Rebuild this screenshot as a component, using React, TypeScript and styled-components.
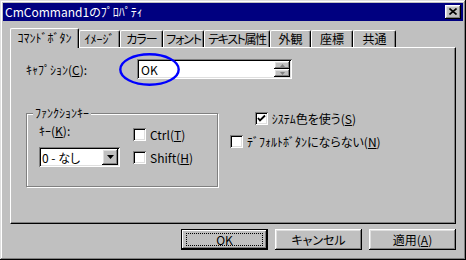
import React from "react";
import styled, { createGlobalStyle } from "styled-components";

const GlobalStyle = createGlobalStyle`
  html, body {
    margin: 0;
    padding: 0;
    background: #c0c0c0;
  }
  body {
    font-family: "Noto Sans CJK JP", "Noto Sans", sans-serif;
    font-size: 12px;
    font-feature-settings: "palt";
    text-autospace: no-autospace;
    text-spacing-trim: space-all;
    color: #000;
  }
  * {
    box-sizing: border-box;
  }
`;

const raised = `
  box-shadow: inset -1px -1px #000, inset 1px 1px #fff, inset -2px -2px #808080,
    inset 2px 2px #dfdfdf;
`;

const sunken = `
  box-shadow: inset 1px 1px #808080, inset -1px -1px #fff, inset 2px 2px #000,
    inset -2px -2px #dfdfdf;
`;

const Window = styled.div`
  width: 466px;
  height: 260px;
  padding: 3px;
  background: #c0c0c0;
  display: flex;
  flex-direction: column;
  box-shadow: inset -1px -1px #000, inset 1px 1px #dfdfdf, inset -2px -2px #808080,
    inset 2px 2px #fff;
`;

const TitleBar = styled.div`
  height: 18px;
  flex: none;
  background: #000080;
  display: flex;
  align-items: center;
  justify-content: space-between;
  padding: 0 2px;
`;

const TitleText = styled.span`
  color: #fff;
  font-size: 12px;
  line-height: 14px;
  white-space: nowrap;
`;

const CloseButton = styled.div`
  width: 16px;
  height: 14px;
  background: #c0c0c0;
  display: flex;
  align-items: center;
  justify-content: center;
  padding-bottom: 1px;
  ${raised}
`;

const Body = styled.div`
  flex: 1;
  display: flex;
  flex-direction: column;
  padding: 7px 7px 0;
`;

const TabRow = styled.div`
  height: 19px;
  display: flex;
  align-items: flex-end;
  position: relative;
  z-index: 1;
`;

const Tab = styled.div<{ $w: number; $ls: number; $active?: boolean }>`
  width: ${(p) => p.$w}px;
  height: ${(p) => (p.$active ? 20 : 17)}px;
  margin-bottom: ${(p) => (p.$active ? -1 : 0)}px;
  padding-bottom: ${(p) => (p.$active ? 3 : 1)}px;
  flex: none;
  background: #c0c0c0;
  border-top: 1px solid #fff;
  border-left: 1px solid #fff;
  border-right: 1px solid #000;
  border-radius: 2px 2px 0 0;
  box-shadow: inset -1px 0 #808080;
  display: flex;
  align-items: center;
  justify-content: center;
  white-space: nowrap;
  line-height: 13px;
  letter-spacing: ${(p) => p.$ls}px;
`;

const Panel = styled.div`
  width: 446px;
  height: 177px;
  flex: none;
  border-top: 1px solid #fff;
  border-left: 1px solid #fff;
  border-right: 1px solid #000;
  border-bottom: 1px solid #000;
  box-shadow: inset -1px -1px #808080;
  padding: 11px 15px;
`;

const CaptionRow = styled.div`
  display: flex;
  align-items: center;
  height: 20px;
  position: relative;
`;

const CaptionLabel = styled.span`
  width: 111px;
  line-height: 13px;
  white-space: nowrap;
`;

const TextBox = styled.div`
  width: 155px;
  height: 20px;
  background: #fff;
  display: flex;
  align-items: center;
  padding: 2px 2px 2px 4px;
  ${sunken}
`;

const TextValue = styled.span`
  flex: 1;
  line-height: 13px;
`;

const SpinColumn = styled.div`
  width: 16px;
  height: 16px;
  display: flex;
  flex-direction: column;
`;

const SpinButton = styled.div`
  flex: 1;
  background: #c0c0c0;
  display: flex;
  align-items: center;
  justify-content: center;
  ${raised}
`;

const Marker = styled.svg`
  position: absolute;
  left: 93px;
  top: -6px;
  pointer-events: none;
`;

const LowerRow = styled.div`
  display: flex;
  align-items: flex-start;
  gap: 12px;
  margin-top: 28px;
`;

const GroupBox = styled.div`
  width: 192px;
  height: 74px;
  margin-top: 6px;
  position: relative;
  border: 1px solid #808080;
  box-shadow: inset 1px 1px #fff, 1px 1px #fff;
`;

const GroupLabel = styled.span`
  position: absolute;
  top: -8px;
  left: 6px;
  padding: 0 2px;
  background: #c0c0c0;
  line-height: 14px;
  white-space: nowrap;
`;

const GroupGrid = styled.div`
  display: grid;
  grid-template-columns: 94px auto;
  grid-template-rows: 20px 20px;
  row-gap: 3px;
  padding: 10px 0 0 12px;
`;

const KeyLabel = styled.span`
  align-self: start;
  line-height: 13px;
  white-space: nowrap;
`;

const Combo = styled.div`
  width: 81px;
  height: 20px;
  background: #fff;
  display: flex;
  align-items: center;
  padding: 2px 2px 2px 3px;
  ${sunken}
`;

const ComboValue = styled.span`
  flex: 1;
  line-height: 13px;
  white-space: nowrap;
`;

const DropButton = styled.div`
  width: 16px;
  height: 16px;
  background: #c0c0c0;
  display: flex;
  align-items: center;
  justify-content: center;
  ${raised}
`;

const RightColumn = styled.div`
  display: flex;
  flex-direction: column;
  gap: 10px;
  padding-top: 5px;
`;

const CheckRow = styled.label`
  display: flex;
  align-items: center;
  justify-self: start;
  align-self: center;
  gap: 4px;
  line-height: 13px;
  white-space: nowrap;
`;

const Box = styled.span`
  width: 13px;
  height: 13px;
  flex: none;
  background: #fff;
  display: flex;
  ${sunken}
`;

const Key = styled.span`
  text-decoration: underline;
  text-underline-offset: 1px;
`;

const ButtonRow = styled.div`
  display: flex;
  justify-content: flex-end;
  gap: 7px;
  margin-top: 5px;
`;

const Button = styled.div<{ $default?: boolean }>`
  width: 87px;
  height: 21px;
  background: #c0c0c0;
  display: flex;
  align-items: center;
  justify-content: center;
  position: relative;
  line-height: 13px;
  white-space: nowrap;
  ${(p) =>
    p.$default
      ? `
    border: 1px solid #000;
    box-shadow: inset -1px -1px #000, inset 1px 1px #fff, inset -2px -2px #808080;
    &::after {
      content: "";
      position: absolute;
      inset: 3px 4px;
      border: 1px dotted #000;
    }
  `
      : raised}
`;

const CheckBox = ({ checked }: { checked?: boolean }) => (
  <Box>
    {checked && (
      <svg width="13" height="13" viewBox="0 0 13 13">
        <polyline
          points="3,6 5,8.5 10,3.5"
          fill="none"
          stroke="#000"
          strokeWidth="1.8"
        />
      </svg>
    )}
  </Box>
);

const tabs = [
  { label: "ｺﾏﾝﾄﾞﾎﾞﾀﾝ", w: 69, ls: 0 },
  { label: "ｲﾒｰｼﾞ", w: 41, ls: 0 },
  { label: "カラー", w: 43, ls: -1 },
  { label: "フォント", w: 41, ls: -1.2 },
  { label: "テキスト属性", w: 66, ls: -1.4 },
  { label: "外観", w: 41, ls: 0 },
  { label: "座標", w: 42, ls: 0 },
  { label: "共通", w: 43, ls: 0 },
];

export default function App() {
  return (
    <>
      <GlobalStyle />
      <Window>
        <TitleBar>
          <TitleText>CmCommand1のﾌﾟﾛﾊﾟﾃｨ</TitleText>
          <CloseButton>
            <svg width="8" height="7" viewBox="0 0 8 7">
              <path d="M0.5 0.5L7.5 6.5M7.5 0.5L0.5 6.5" stroke="#000" strokeWidth="1.6" />
            </svg>
          </CloseButton>
        </TitleBar>
        <Body>
          <TabRow>
            {tabs.map((t, i) => (
              <Tab key={t.label} $w={t.w} $ls={t.ls} $active={i === 0}>
                {t.label}
              </Tab>
            ))}
          </TabRow>
          <Panel>
            <CaptionRow>
              <CaptionLabel>
                ｷｬﾌﾟｼｮﾝ(<Key>C</Key>):
              </CaptionLabel>
              <TextBox>
                <TextValue>OK</TextValue>
                <SpinColumn>
                  <SpinButton>
                    <svg width="5" height="3" viewBox="0 0 5 3">
                      <polygon points="2.5,0 5,3 0,3" fill="#808080" />
                    </svg>
                  </SpinButton>
                  <SpinButton>
                    <svg width="5" height="3" viewBox="0 0 5 3">
                      <polygon points="0,0 5,0 2.5,3" fill="#808080" />
                    </svg>
                  </SpinButton>
                </SpinColumn>
              </TextBox>
              <Marker width="61" height="33" viewBox="0 0 61 33">
                <ellipse
                  cx="30.5"
                  cy="16.5"
                  rx="29.2"
                  ry="15.2"
                  fill="none"
                  stroke="#0000ff"
                  strokeWidth="2.4"
                />
              </Marker>
            </CaptionRow>
            <LowerRow>
              <GroupBox>
                <GroupLabel>ﾌｧﾝｸｼｮﾝｷｰ</GroupLabel>
                <GroupGrid>
                  <KeyLabel>
                    ｷｰ(<Key>K</Key>):
                  </KeyLabel>
                  <CheckRow>
                    <CheckBox />
                    <span>
                      Ctrl(<Key>T</Key>)
                    </span>
                  </CheckRow>
                  <Combo>
                    <ComboValue>0 - なし</ComboValue>
                    <DropButton>
                      <svg width="7" height="4" viewBox="0 0 7 4">
                        <polygon points="0,0 7,0 3.5,4" fill="#000" />
                      </svg>
                    </DropButton>
                  </Combo>
                  <CheckRow>
                    <CheckBox />
                    <span>
                      Shift(<Key>H</Key>)
                    </span>
                  </CheckRow>
                </GroupGrid>
              </GroupBox>
              <RightColumn>
                <CheckRow>
                  <CheckBox checked />
                  <span>
                    ｼｽﾃﾑ色を使う(<Key>S</Key>)
                  </span>
                </CheckRow>
                <CheckRow>
                  <CheckBox />
                  <span>
                    ﾃﾞﾌｫﾙﾄﾎﾞﾀﾝにならない(<Key>N</Key>)
                  </span>
                </CheckRow>
              </RightColumn>
            </LowerRow>
          </Panel>
          <ButtonRow>
            <Button $default>OK</Button>
            <Button>キャンセル</Button>
            <Button>
              適用(<Key>A</Key>)
            </Button>
          </ButtonRow>
        </Body>
      </Window>
    </>
  );
}
